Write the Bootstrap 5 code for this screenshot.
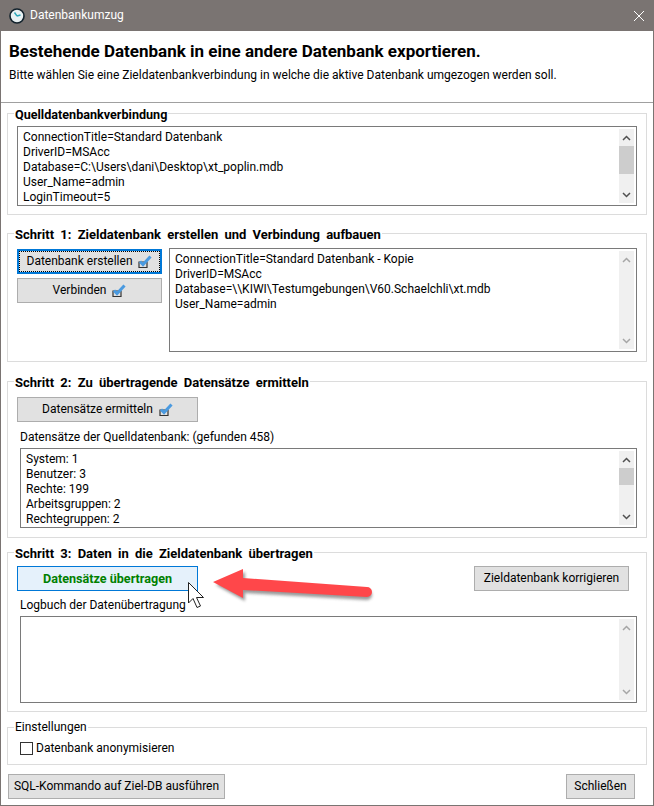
<!DOCTYPE html>
<html lang="de">
<head>
<meta charset="utf-8">
<title>Datenbankumzug</title>
<link rel="stylesheet" href="https://cdn.jsdelivr.net/npm/bootstrap@5.3.0/dist/css/bootstrap.min.css">
<style>
html,body{height:806px;overflow:hidden;background:#fff}
body{font-family:"Roboto","Open Sans","Liberation Sans",sans-serif;font-size:12px;line-height:15px;color:#000}
.win{width:654px;height:806px;border:solid #7a7472;border-width:0 1px 1px 1px;background:#fff}
.ttl{height:31px;background:#7a7472;color:#fff;padding-left:8px}
.ttl-ic{margin-right:5px}
.ttl-x{margin-right:9px}
.hdr{height:72px;border-bottom:1px solid #a0a0a0;padding:10px 0 0 8px}
.hdr-t{font-size:17px;line-height:21px;font-weight:700;margin:0 0 6px}
.hdr-s{margin:0}
.grp{border:1px solid #dcdcdc;margin:0 6px;padding:0 9px;min-width:0}
.grp legend{float:none;width:auto;font-size:13px;line-height:15px;font-weight:700;word-spacing:3px;margin:0 0 0 -3px;padding:2px 1px 0}
.g1{height:110px;margin-top:2px;padding-top:4px}
.g1 legend{font-size:12.6px}
.g2{height:137px;margin-top:10px;padding-top:6px}
.g3{height:165px;margin-top:11px;padding-top:7px}
.g4{height:168px;margin-top:6px;padding-top:5px}
.g5{height:45px;margin-top:8px}
.g5 legend{font-weight:400;font-size:12px;word-spacing:0;padding:0 1px}
.tb{border:1px solid #7a7a7a;background:#fff;padding:2px 2px 2px 5px}
.tb-txt{white-space:pre;padding-top:1px}
.h80{height:80px}
.h104{height:104px}
.h87{height:87px}
.ml3{margin-left:3px}
.sb{width:15px;background:#f0f0f0}
.sb-a{height:17px;color:#505050}
.sb-off .sb-a{color:#a6a6a6}
.sb-th{background:#cdcdcd;height:28px}
.sb-th17{background:#cdcdcd;height:17px}
.bt{border:1px solid #adadad;background:#e1e1e1;color:#000;height:25px;font-size:12px;line-height:15px;padding:0;border-radius:0}
.bt svg{vertical-align:-3px;margin-left:3px}
.bt-foc{border:2px solid #0078d7;outline:1px dotted #000;outline-offset:-3px}
.bt-go{background:#e5f1fb;border-color:#0078d7;color:#008000;font-weight:700;font-size:12.6px}
.w145{width:145px}
.w181{width:181px}
.w155{width:155px}
.w217{width:217px}
.w69{width:69px}
.lbl{margin:8px 0 3px 3px}
.lbl2{margin:7px 0 3px 3px}
.col-l{margin-top:1px;gap:4px}
.gp7{gap:7px}
.pr8{padding-right:8px}
.chk{appearance:none;width:13px;height:13px;border:1px solid #333;margin:0 3px 0 3px;background:#fff}
.chk-row{margin-top:6px}
.foot{padding:9px 18px 0 7px}
.ovl{position:absolute;left:0;top:0;pointer-events:none}
</style>
</head>
<body>
<div class="win d-flex flex-column position-relative">
  <div class="ttl d-flex align-items-center">
    <svg class="ttl-ic" width="16" height="16" viewBox="0 0 16 16"><circle cx="8" cy="8" r="7" fill="#e8f0f2" stroke="#12222c" stroke-width="1.6"/><path d="M8 8 5.500 4.500M8 8l3.500-1" stroke="#2ba6b8" stroke-width="1.400" fill="none"/></svg>
    <span class="flex-grow-1">Datenbankumzug</span>
    <svg class="ttl-x" width="10" height="10" viewBox="0 0 10 10"><path d="M0 0 10 10M10 0 0 10" stroke="#fff" stroke-width="1"/></svg>
  </div>
  <div class="hdr">
    <p class="hdr-t">Bestehende Datenbank in eine andere Datenbank exportieren.</p>
    <p class="hdr-s">Bitte wählen Sie eine Zieldatenbankverbindung in welche die aktive Datenbank umgezogen werden soll.</p>
  </div>
  <fieldset class="grp g1">
    <legend>Quelldatenbankverbindung</legend>
    <div class="tb h80 d-flex">
      <div class="tb-txt flex-grow-1">ConnectionTitle=Standard Datenbank
DriverID=MSAcc
Database=C:\Users\dani\Desktop\xt_poplin.mdb
User_Name=admin
LoginTimeout=5</div>
      <div class="sb d-flex flex-column">
        <div class="sb-a d-flex align-items-center justify-content-center"><svg width="9" height="6" viewBox="0 0 9 6"><path d="M1 5 4.500 1.500 8 5" fill="none" stroke="currentColor" stroke-width="1.500"/></svg></div>
        <div class="sb-th"></div>
        <div class="flex-grow-1"></div>
        <div class="sb-a d-flex align-items-center justify-content-center"><svg width="9" height="6" viewBox="0 0 9 6"><path d="M1 1 4.500 4.500 8 1" fill="none" stroke="currentColor" stroke-width="1.500"/></svg></div>
      </div>
    </div>
  </fieldset>
  <fieldset class="grp g2">
    <legend>Schritt 1: Zieldatenbank erstellen und Verbindung aufbauen</legend>
    <div class="d-flex gp7">
      <div class="d-flex flex-column col-l">
        <button class="btn bt bt-foc w145">Datenbank erstellen <svg width="14" height="14" viewBox="0 0 14 14"><path d="M1 8h8v5.500H1z" fill="none" stroke="#333" stroke-width="1.200"/><path d="M2 7.500 5 10.500 12.500 2.500" fill="none" stroke="#4a9ae0" stroke-width="3"/></svg></button>
        <button class="btn bt w145">Verbinden <svg width="14" height="14" viewBox="0 0 14 14"><path d="M1 8h8v5.500H1z" fill="none" stroke="#333" stroke-width="1.200"/><path d="M2 7.500 5 10.500 12.500 2.500" fill="none" stroke="#4a9ae0" stroke-width="3"/></svg></button>
      </div>
      <div class="tb flex-grow-1 d-flex h104">
        <div class="tb-txt flex-grow-1">ConnectionTitle=Standard Datenbank - Kopie
DriverID=MSAcc
Database=\\KIWI\Testumgebungen\V60.Schaelchli\xt.mdb
User_Name=admin</div>
        <div class="sb sb-off d-flex flex-column">
          <div class="sb-a d-flex align-items-center justify-content-center"><svg width="9" height="6" viewBox="0 0 9 6"><path d="M1 5 4.500 1.500 8 5" fill="none" stroke="currentColor" stroke-width="1.500"/></svg></div>
          <div class="flex-grow-1"></div>
          <div class="sb-a d-flex align-items-center justify-content-center"><svg width="9" height="6" viewBox="0 0 9 6"><path d="M1 1 4.500 4.500 8 1" fill="none" stroke="currentColor" stroke-width="1.500"/></svg></div>
        </div>
      </div>
    </div>
  </fieldset>
  <fieldset class="grp g3">
    <legend>Schritt 2: Zu übertragende Datensätze ermitteln</legend>
    <button class="btn bt w181">Datensätze ermitteln <svg width="14" height="14" viewBox="0 0 14 14"><path d="M1 8h8v5.500H1z" fill="none" stroke="#333" stroke-width="1.200"/><path d="M2 7.500 5 10.500 12.500 2.500" fill="none" stroke="#4a9ae0" stroke-width="3"/></svg></button>
    <div class="lbl">Datensätze der Quelldatenbank: (gefunden 458)</div>
    <div class="tb h80 d-flex ml3">
      <div class="tb-txt flex-grow-1">System: 1
Benutzer: 3
Rechte: 199
Arbeitsgruppen: 2
Rechtegruppen: 2</div>
      <div class="sb d-flex flex-column">
        <div class="sb-a d-flex align-items-center justify-content-center"><svg width="9" height="6" viewBox="0 0 9 6"><path d="M1 5 4.500 1.500 8 5" fill="none" stroke="currentColor" stroke-width="1.500"/></svg></div>
        <div class="sb-th17"></div>
        <div class="flex-grow-1"></div>
        <div class="sb-a d-flex align-items-center justify-content-center"><svg width="9" height="6" viewBox="0 0 9 6"><path d="M1 1 4.500 4.500 8 1" fill="none" stroke="currentColor" stroke-width="1.500"/></svg></div>
      </div>
    </div>
  </fieldset>
  <fieldset class="grp g4">
    <legend>Schritt 3: Daten in die Zieldatenbank übertragen</legend>
    <div class="d-flex justify-content-between pr8">
      <button class="btn bt bt-go w181">Datensätze übertragen</button>
      <button class="btn bt w155">Zieldatenbank korrigieren</button>
    </div>
    <div class="lbl2">Logbuch der Datenübertragung</div>
    <div class="tb h87 d-flex ml3">
      <div class="tb-txt flex-grow-1"></div>
      <div class="sb sb-off d-flex flex-column">
        <div class="sb-a d-flex align-items-center justify-content-center"><svg width="9" height="6" viewBox="0 0 9 6"><path d="M1 5 4.500 1.500 8 5" fill="none" stroke="currentColor" stroke-width="1.500"/></svg></div>
        <div class="flex-grow-1"></div>
        <div class="sb-a d-flex align-items-center justify-content-center"><svg width="9" height="6" viewBox="0 0 9 6"><path d="M1 1 4.500 4.500 8 1" fill="none" stroke="currentColor" stroke-width="1.500"/></svg></div>
      </div>
    </div>
  </fieldset>
  <fieldset class="grp g5">
    <legend>Einstellungen</legend>
    <label class="d-flex align-items-center chk-row"><input type="checkbox" class="chk">Datenbank anonymisieren</label>
  </fieldset>
  <div class="foot d-flex justify-content-between">
    <button class="btn bt w217">SQL-Kommando auf Ziel-DB ausführen</button>
    <button class="btn bt w69">Schließen</button>
  </div>
  <svg class="ovl" width="652" height="805" viewBox="0 0 652 805">
    <defs><filter id="sd" x="-20%" y="-30%" width="140%" height="170%"><feGaussianBlur stdDeviation="1.600"/></filter></defs>
    <g transform="translate(-1 0)">
      <path d="M216 585 245 572V581L367 590A5 5 0 0 1 367 600L245 593V601Z" fill="#555" opacity=".6" filter="url(#sd)"/>
      <path d="M213 582 243 569V578L367 587A5 5 0 0 1 367 597L243 590V598Z" fill="#ff474a"/>
      <path d="M188.500 582.500V603L193 598.500 197 607.500 200.500 606 196.500 597.500H203.500Z" fill="#fff" stroke="#222" stroke-width="1"/>
    </g>
  </svg>
</div>
</body>
</html>
